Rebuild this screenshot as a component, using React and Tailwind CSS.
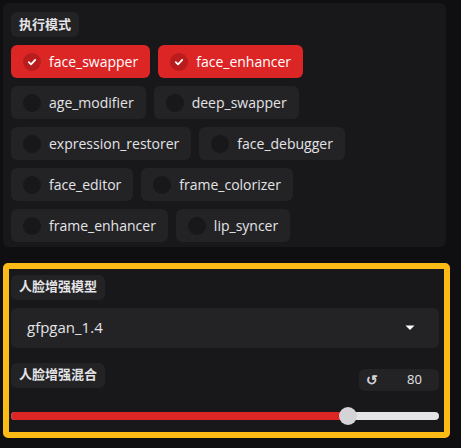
import React, { useState } from 'react';

const processors = [
  ['face_swapper', 'face_enhancer'],
  ['age_modifier', 'deep_swapper'],
  ['expression_restorer', 'face_debugger'],
  ['face_editor', 'frame_colorizer'],
  ['frame_enhancer', 'lip_syncer'],
];

const font = { fontFamily: '"Open Sans", "Noto Sans CJK SC", sans-serif' };

const Label = ({ children }) => (
  <div className="inline-flex h-[25px] items-center rounded-md bg-[#232326] px-[8px] text-[13px] font-bold text-[#e4e4e7]">
    {children}
  </div>
);

const Check = () => (
  <svg width="10" height="10" viewBox="0 0 10 10">
    <path d="M1.8 5.2 L4 7.3 L8.2 2.8" fill="none" stroke="white" strokeWidth="1.8" strokeLinecap="round" strokeLinejoin="round" />
  </svg>
);

const Chip = ({ name, checked, onToggle }) => (
  <button
    onClick={onToggle}
    className={`flex h-[33px] items-center gap-[8px] rounded-md pl-[12px] pr-[12px] text-[14px] ${
      checked ? 'bg-[#dc2626] text-white' : 'bg-[#232326] text-[#e4e4e7]'
    }`}
  >
    <span
      className={`flex h-[18px] w-[18px] items-center justify-center rounded-full ${
        checked ? 'bg-[#b91c1c]' : 'bg-[#18181b]'
      }`}
    >
      {checked && <Check />}
    </span>
    {name}
  </button>
);

export default function App() {
  const [selected, setSelected] = useState(['face_swapper', 'face_enhancer']);
  const [blend, setBlend] = useState(80);

  const toggle = (name) =>
    setSelected(selected.includes(name) ? selected.filter((n) => n !== name) : [...selected, name]);

  // thumb stays inside the track, like a native range input
  const thumbLeft = `calc(${blend / 100} * (100% - 18px) + 9px)`;

  return (
    <div className="h-[448px] w-full overflow-hidden bg-[#0f0f11] pt-[3px]" style={font}>
      {/* Processors panel */}
      <div className="ml-[3px] w-[443px] rounded-md bg-[#18181b] px-[8px] pt-[8px] pb-[5px]">
        <Label>执行模式</Label>
        <div className="mt-[8px] flex flex-col gap-[8px]">
          {processors.map((row, i) => (
            <div key={i} className="flex gap-[8px]">
              {row.map((name) => (
                <Chip key={name} name={name} checked={selected.includes(name)} onToggle={() => toggle(name)} />
              ))}
            </div>
          ))}
        </div>
      </div>

      {/* Face enhancer panel (highlighted) */}
      <div className="ml-[3px] mt-[16px] w-[447px] rounded-[5px] border-[6px] border-[#fbba16] bg-[#18181b] pl-[2px] pr-[5px] pt-[4px] pb-[7px]">
        <Label>人脸增强模型</Label>
        <div className="mt-[8px] flex h-[40px] items-center justify-between rounded-md bg-[#232326] pl-[16px] pr-[24px] text-[15px] text-[#e4e4e7]">
          <span>gfpgan_1.4</span>
          <svg width="10" height="6" viewBox="0 0 10 6">
            <path d="M0.5 0.5 H9.5 L5 5 Z" fill="white" />
          </svg>
        </div>
        <div className="mt-[15px] flex items-start justify-between">
          <Label>人脸增强混合</Label>
          <div className="mt-[6px] flex h-[22px] w-[80px] items-center rounded-md bg-[#232326] pl-[7px] text-[13px] text-[#e4e4e7]">
            <span className="text-[14px] font-bold leading-none text-[#d4d4d8]">↺</span>
            <span className="flex-1 pl-[12px] text-center">{blend}</span>
          </div>
        </div>
        <div className="relative mt-[16px] h-[18px]">
          <div className="absolute left-0 right-0 top-[5px] h-[8px] rounded-full bg-[#e4e4e7]" />
          <div className="absolute left-0 top-[5px] h-[8px] rounded-full bg-[#dc2626]" style={{ width: thumbLeft }} />
          <div
            className="absolute top-0 h-[18px] w-[18px] -translate-x-1/2 rounded-full bg-[#d4d4d8]"
            style={{ left: thumbLeft }}
          />
          <input
            type="range"
            min="0"
            max="100"
            value={blend}
            onChange={(e) => setBlend(Number(e.target.value))}
            className="absolute inset-0 w-full opacity-0"
          />
        </div>
      </div>
    </div>
  );
}
